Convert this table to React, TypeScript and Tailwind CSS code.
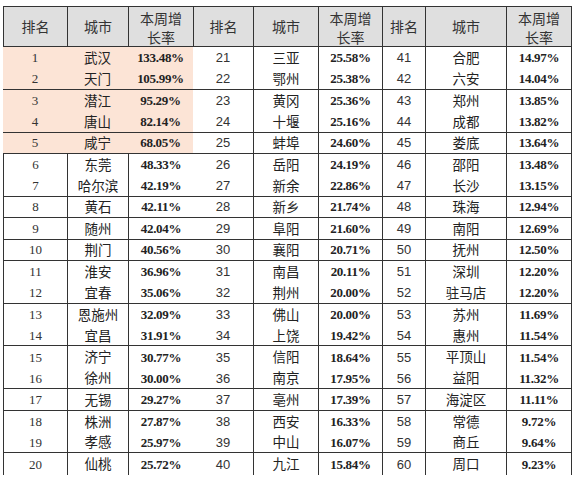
const rows: [string, string, string][][] = [
  [["1", "武汉", "133.48%"], ["21", "三亚", "25.58%"], ["41", "合肥", "14.97%"]],
  [["2", "天门", "105.99%"], ["22", "鄂州", "25.38%"], ["42", "六安", "14.04%"]],
  [["3", "潜江", "95.29%"], ["23", "黄冈", "25.36%"], ["43", "郑州", "13.85%"]],
  [["4", "唐山", "82.14%"], ["24", "十堰", "25.16%"], ["44", "成都", "13.82%"]],
  [["5", "咸宁", "68.05%"], ["25", "蚌埠", "24.60%"], ["45", "娄底", "13.64%"]],
  [["6", "东莞", "48.33%"], ["26", "岳阳", "24.19%"], ["46", "邵阳", "13.48%"]],
  [["7", "哈尔滨", "42.19%"], ["27", "新余", "22.86%"], ["47", "长沙", "13.15%"]],
  [["8", "黄石", "42.11%"], ["28", "新乡", "21.74%"], ["48", "珠海", "12.94%"]],
  [["9", "随州", "42.04%"], ["29", "阜阳", "21.60%"], ["49", "南阳", "12.69%"]],
  [["10", "荆门", "40.56%"], ["30", "襄阳", "20.71%"], ["50", "抚州", "12.50%"]],
  [["11", "淮安", "36.96%"], ["31", "南昌", "20.11%"], ["51", "深圳", "12.20%"]],
  [["12", "宜春", "35.06%"], ["32", "荆州", "20.00%"], ["52", "驻马店", "12.20%"]],
  [["13", "恩施州", "32.09%"], ["33", "佛山", "20.00%"], ["53", "苏州", "11.69%"]],
  [["14", "宜昌", "31.91%"], ["34", "上饶", "19.42%"], ["54", "惠州", "11.54%"]],
  [["15", "济宁", "30.77%"], ["35", "信阳", "18.64%"], ["55", "平顶山", "11.54%"]],
  [["16", "徐州", "30.00%"], ["36", "南京", "17.95%"], ["56", "益阳", "11.32%"]],
  [["17", "无锡", "29.27%"], ["37", "亳州", "17.39%"], ["57", "海淀区", "11.11%"]],
  [["18", "株洲", "27.87%"], ["38", "西安", "16.33%"], ["58", "常德", "9.72%"]],
  [["19", "孝感", "25.97%"], ["39", "中山", "16.07%"], ["59", "商丘", "9.64%"]],
  [["20", "仙桃", "25.72%"], ["40", "九江", "15.84%"], ["60", "周口", "9.23%"]],
];

// 分组的底线（行号从 1 开始）
const groupEnds = [2, 4, 5, 7, 8, 9, 10, 12, 14, 16, 17, 19];

const widths = [
  "w-[64px]", "w-[61px]", "w-[65px]",
  "w-[60px]", "w-[65px]", "w-[64px]",
  "w-[43px]", "w-[81px]", "w-[66px]",
];

const cjk = "font-['Noto_Sans_CJK_SC',sans-serif]";
const serif = "font-['Liberation_Serif','Noto_Sans_CJK_SC',serif]";

function HeaderCell({ i, children }: { i: number; children: React.ReactNode }) {
  return (
    <div
      className={`${widths[i]} shrink-0 h-full flex flex-col items-center justify-center border-l border-[#333] ${
        i === 8 ? "border-r" : ""
      }`}
    >
      {children}
    </div>
  );
}

function BodyRow({ r }: { r: number }) {
  const hi = r < 5;
  const bottom = groupEnds.includes(r + 1) ? "border-b border-b-[#333]" : "";
  const cells = rows[r].flat();
  return (
    <div className={`flex h-[21.4px] ${bottom}`}>
      {cells.map((txt, i) => {
        const kind = i % 3;
        const peach = hi && i < 3;
        const line = peach || i === 3 ? "" : "border-l border-l-[#333]";
        const last = i === 8 ? "border-r border-r-[#333]" : "";
        const font =
          kind === 0
            ? i === 0
              ? `${serif} text-[13px] text-[#333]`
              : "font-['Liberation_Sans',sans-serif] text-[13px] text-[#333]"
            : kind === 1
              ? `${cjk} text-[13.5px] text-[#222]`
              : `${serif} font-bold text-[13px] tracking-[-0.3px] text-[#222]`;
        return (
          <div
            key={i}
            className={`${widths[i]} shrink-0 flex items-center justify-center leading-none ${line} ${last} ${
              peach ? "bg-[#fce4d6]" : ""
            } ${font}`}
          >
            {txt}
          </div>
        );
      })}
    </div>
  );
}

export default function App() {
  return (
    <div className="w-[576px] h-[483px] bg-white pt-[6px] pl-[3px] overflow-hidden">
      <div className="w-[569px]">
        <div className={`flex h-[41px] border-t border-b border-[#333] bg-[#dfdfdf] text-[14px] text-[#333] ${cjk}`}>
          {[0, 1, 2].map((b) => (
            <div key={b} className="contents">
              <HeaderCell i={b * 3}>排名</HeaderCell>
              <HeaderCell i={b * 3 + 1}>城市</HeaderCell>
              <HeaderCell i={b * 3 + 2}>
                <span className="leading-[20px]">本周增</span>
                <span className="leading-[18px]">长率</span>
              </HeaderCell>
            </div>
          ))}
        </div>
        {rows.map((_, r) => (
          <BodyRow key={r} r={r} />
        ))}
      </div>
    </div>
  );
}
